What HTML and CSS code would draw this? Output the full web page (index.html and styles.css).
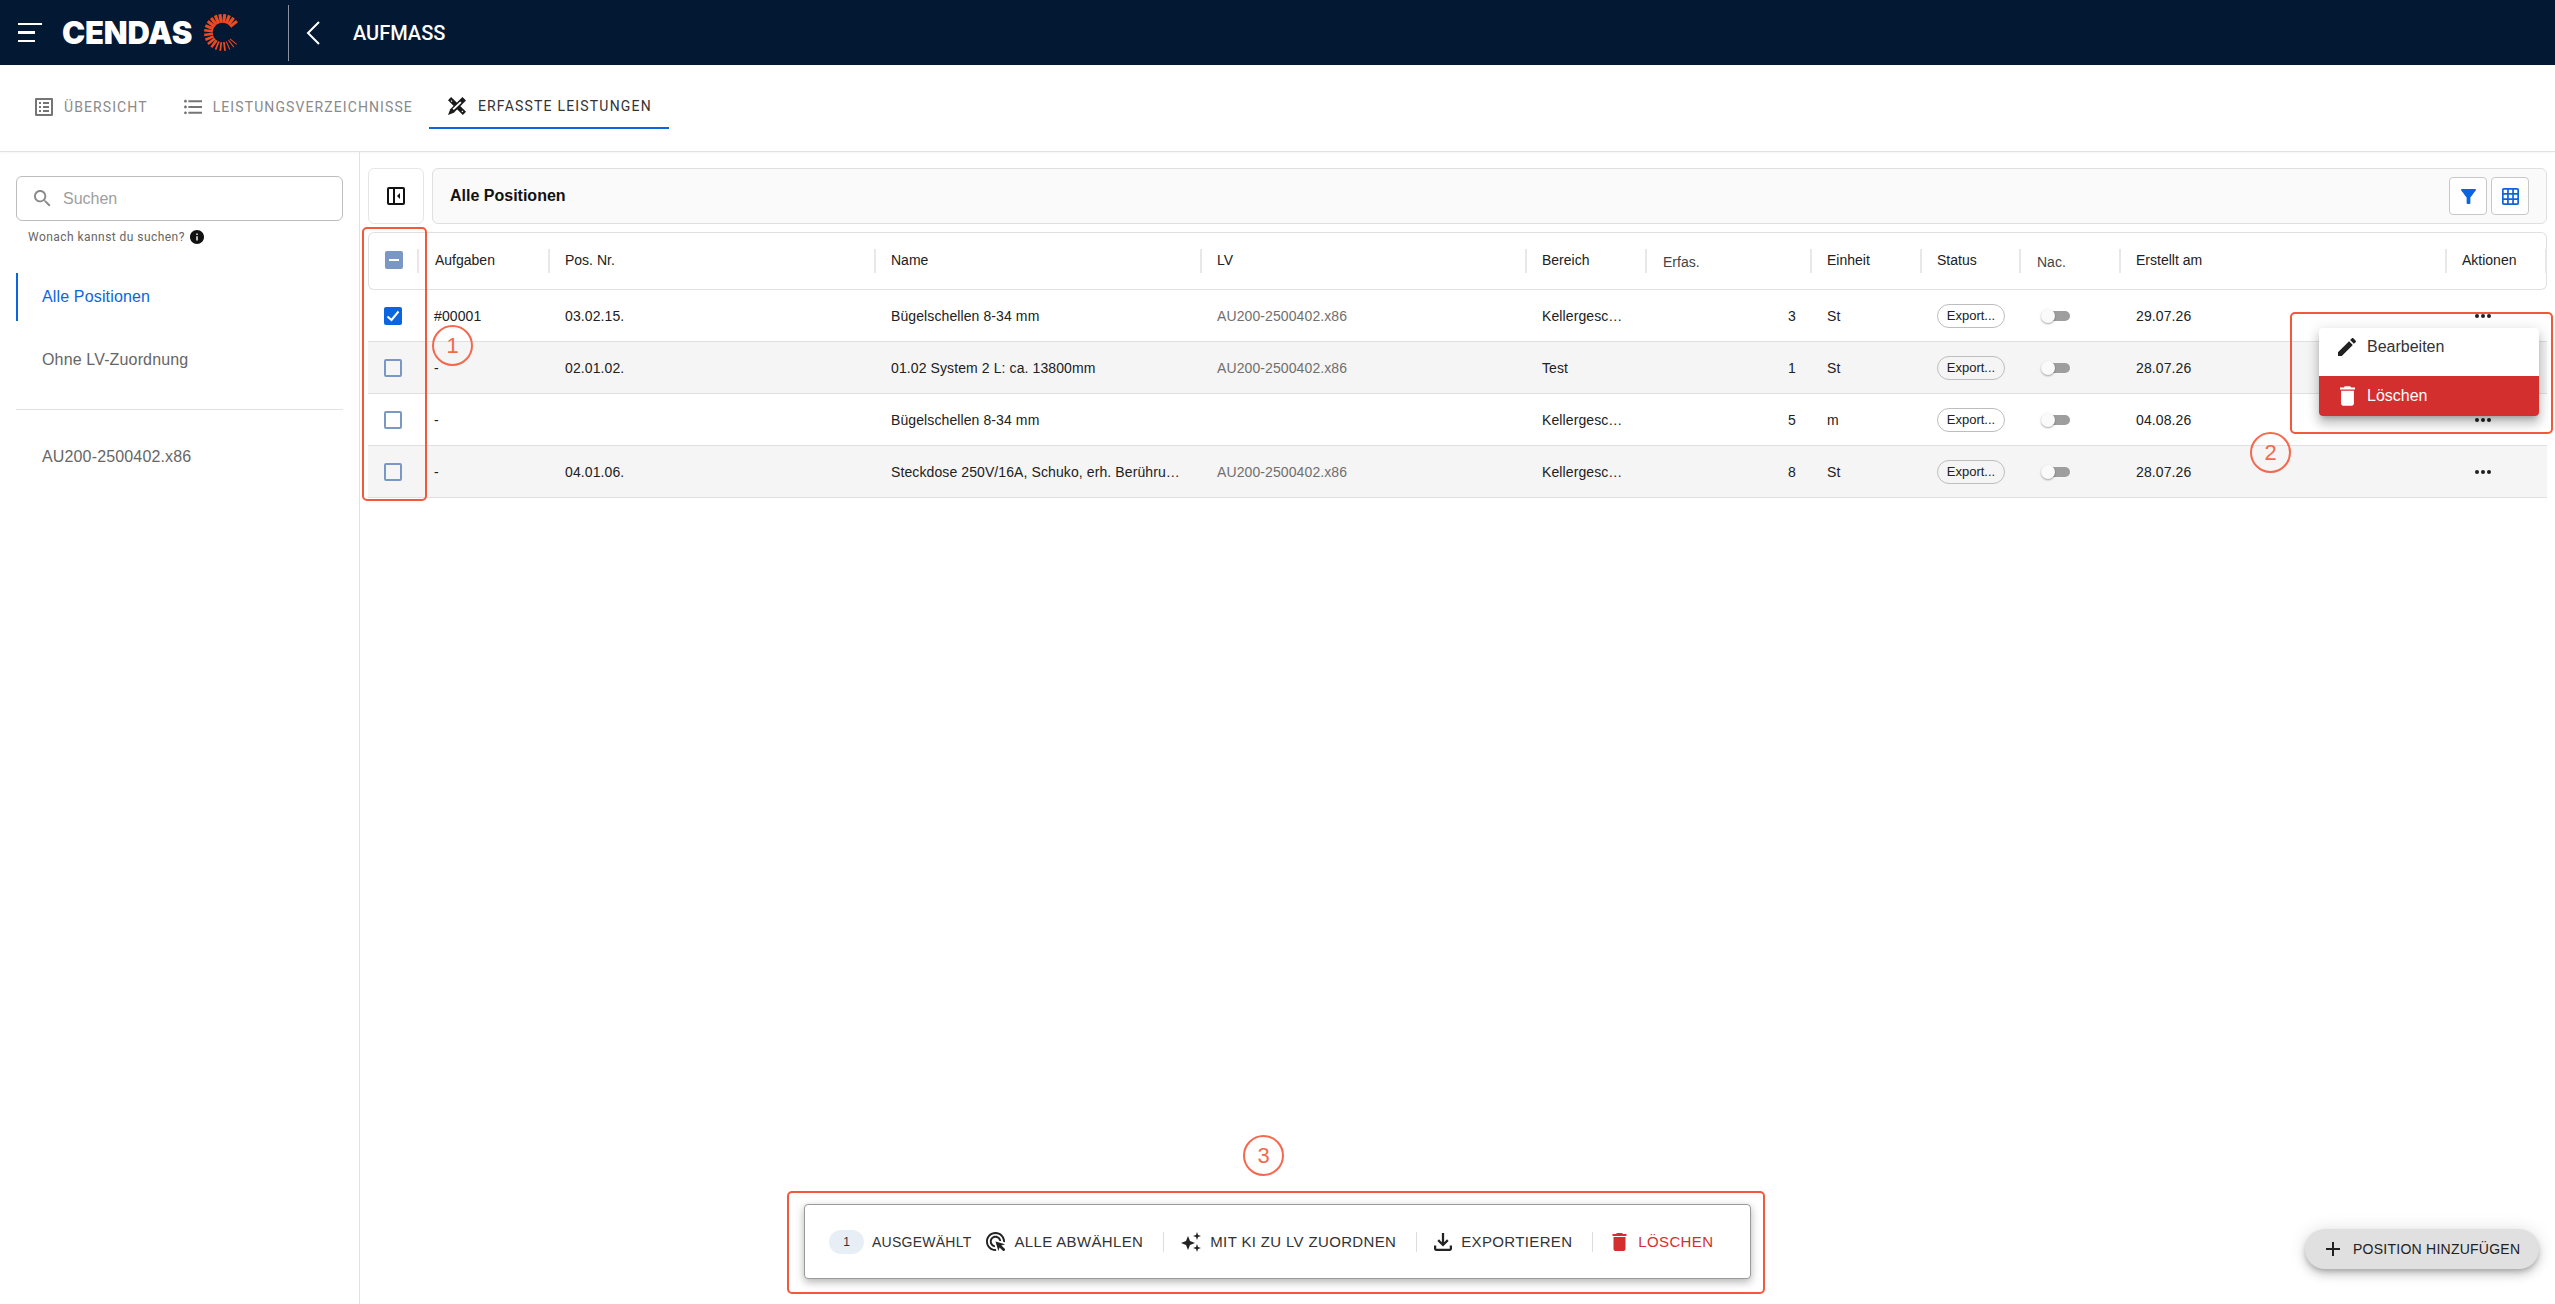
FILE: index.html
```html
<!DOCTYPE html>
<html lang="de">
<head>
    <meta charset="UTF-8">
    <title>Aufmass</title>
    <link rel="stylesheet" href="styles.css">
</head>
<body>
    <header class="topbar">
        <div class="brand">
            <div class="menu-icon"><span></span><span></span><span></span></div>
            <span class="brand-name">CENDAS</span>
            <svg class="brand-mark" viewBox="0 0 38 38" stroke="#f0491f" fill="none">
                <g stroke-width="3.2">
                    <line x1="19" y1="9" x2="19" y2="0" transform="rotate(52 19 19)"/>
                    <line x1="19" y1="9" x2="19" y2="0" transform="rotate(37 19 19)"/>
                    <line x1="19" y1="9" x2="19" y2="0" transform="rotate(22 19 19)"/>
                    <line x1="19" y1="9" x2="19" y2="0" transform="rotate(7 19 19)"/>
                    <line x1="19" y1="9" x2="19" y2="0" transform="rotate(-8 19 19)"/>
                    <line x1="19" y1="9" x2="19" y2="0" transform="rotate(-23 19 19)"/>
                    <line x1="19" y1="9" x2="19" y2="0" transform="rotate(-38 19 19)"/>
                    <line x1="19" y1="9" x2="19" y2="0" transform="rotate(-53 19 19)"/>
                    <line x1="19" y1="9" x2="19" y2="0" transform="rotate(-68 19 19)"/>
                </g>
                <g stroke-width="2.6">
                    <line x1="19" y1="9" x2="19" y2="0" transform="rotate(-83 19 19)"/>
                    <line x1="19" y1="9" x2="19" y2="0" transform="rotate(-98 19 19)"/>
                    <line x1="19" y1="9" x2="19" y2="0" transform="rotate(-113 19 19)"/>
                    <line x1="19" y1="9" x2="19" y2="0" transform="rotate(-128 19 19)"/>
                    <line x1="19" y1="9" x2="19" y2="0" transform="rotate(-143 19 19)"/>
                </g>
                <g stroke-width="1.8">
                    <line x1="19" y1="9" x2="19" y2="0" transform="rotate(-158 19 19)"/>
                    <line x1="19" y1="9" x2="19" y2="0" transform="rotate(-173 19 19)"/>
                    <line x1="19" y1="9" x2="19" y2="0" transform="rotate(172 19 19)"/>
                </g>
                <g stroke-width="1">
                    <line x1="19" y1="9" x2="19" y2="0" transform="rotate(157 19 19)"/>
                    <line x1="19" y1="9" x2="19" y2="0" transform="rotate(142 19 19)"/>
                    <line x1="19" y1="9" x2="19" y2="0" transform="rotate(130 19 19)"/>
                </g>
            </svg>
        </div>
        <svg class="back-icon" viewBox="0 0 14 24" fill="none" stroke="#fff" stroke-width="2"><polyline points="13,1 2,12 13,23"/></svg>
        <span class="page-title">AUFMASS</span>
    </header>

    <nav class="tabs">
        <a class="tab">
            <svg class="tab-icon" viewBox="3 3 18 18"><path d="M19 5v14H5V5h14m1.1-2H3.9c-.5 0-.9.4-.9.9v16.2c0 .4.4.9.9.9h16.2c.4 0 .9-.5.9-.9V3.9c0-.5-.5-.9-.9-.9zM11 7h6v2h-6V7zm0 4h6v2h-6v-2zm0 4h6v2h-6zM7 7h2v2H7zm0 4h2v2H7zm0 4h2v2H7z"/></svg>
            ÜBERSICHT
        </a>
        <a class="tab">
            <svg class="tab-icon" viewBox="2.5 3 18.5 18"><path d="M4 10.5c-.83 0-1.5.67-1.5 1.5s.67 1.5 1.5 1.5 1.5-.67 1.5-1.5-.67-1.5-1.5-1.5zm0-6c-.83 0-1.5.67-1.5 1.5S3.17 7.5 4 7.5 5.5 6.83 5.5 6 4.83 4.5 4 4.5zm0 12c-.83 0-1.5.68-1.5 1.5s.68 1.5 1.5 1.5 1.5-.68 1.5-1.5-.67-1.5-1.5-1.5zM7 19h14v-2H7v2zm0-6h14v-2H7v2zm0-8v2h14V5H7z"/></svg>
            LEISTUNGSVERZEICHNISSE
        </a>
        <a class="tab tab-active">
            <svg class="tab-icon" viewBox="0 0 20 20">
                <path d="M0 3.5L3.5 0 20 16.5 16.5 20z"/>
                <path d="M20 4L16 0 2.5 13.5 0 20l6.5-2.5z"/>
                <path d="M13.5 5l1.5 1.5-8.5 8-1.5-1.5zM4 3.5l1 1-1 1-1-1zM16 15l1 1-1 1-1-1z" fill="#fff"/>
            </svg>
            ERFASSTE LEISTUNGEN
        </a>
    </nav>

    <div class="layout">
        <aside class="sidebar">
            <div class="search">
                <svg class="search-icon" viewBox="3 3 18 18"><path d="M15.5 14h-.79l-.28-.27C15.41 12.59 16 11.11 16 9.5 16 5.91 13.09 3 9.5 3S3 5.91 3 9.5 5.91 16 9.5 16c1.61 0 3.09-.59 4.23-1.57l.27.28v.79l5 4.99L20.49 19l-4.99-5zm-6 0C7.01 14 5 11.99 5 9.5S7.01 5 9.5 5 14 7.01 14 9.5 11.99 14 9.5 14z"/></svg>
                <span>Suchen</span>
            </div>
            <div class="search-help">
                Wonach kannst du suchen?
                <svg viewBox="2 2 20 20"><path d="M12 2C6.48 2 2 6.48 2 12s4.48 10 10 10 10-4.48 10-10S17.52 2 12 2zm1 15h-2v-6h2v6zm0-8h-2V7h2v2z"/></svg>
            </div>
            <a class="nav-item nav-active">Alle Positionen</a>
            <a class="nav-item nav-second">Ohne LV-Zuordnung</a>
            <div class="nav-divider"></div>
            <a class="nav-item">AU200-2500402.x86</a>
        </aside>

        <main class="content">
            <div class="toolbar">
                <button class="panel-toggle">
                    <svg viewBox="0 0 18 18" width="18" height="18" fill="none" stroke="#111" stroke-width="2">
                        <rect x="1" y="1" width="16" height="16" rx="1"/>
                        <line x1="7" y1="1" x2="7" y2="17"/>
                        <path d="M13 6v6l-3-3z" fill="#111" stroke="none"/>
                    </svg>
                </button>
                <div class="title-bar">
                    <h2>Alle Positionen</h2>
                    <div class="title-actions">
                        <button class="icon-btn"><svg viewBox="4 4 16 16" width="15" height="15"><path d="M4.25 5.61C6.27 8.2 10 13 10 13v6c0 .55.45 1 1 1h2c.55 0 1-.45 1-1v-6s3.72-4.8 5.74-7.39c.51-.66.04-1.61-.79-1.61H5.04c-.83 0-1.3.95-.79 1.61z"/></svg></button>
                        <button class="icon-btn"><svg viewBox="2 2 20 20" width="17" height="17"><path d="M20 2H4c-1.1 0-2 .9-2 2v16c0 1.1.9 2 2 2h16c1.1 0 2-.9 2-2V4c0-1.1-.9-2-2-2zM8 20H4v-4h4v4zm0-6H4v-4h4v4zm0-6H4V4h4v4zm6 12h-4v-4h4v4zm0-6h-4v-4h4v4zm0-6h-4V4h4v4zm6 12h-4v-4h4v4zm0-6h-4v-4h4v4zm0-6h-4V4h4v4z"/></svg></button>
                    </div>
                </div>
            </div>

            <div class="table">
                <div class="row head">
                    <div class="cell cell-check"><span class="check check-mixed"></span></div>
                    <div class="cell cell-first">Aufgaben</div>
                    <div class="cell">Pos. Nr.</div>
                    <div class="cell">Name</div>
                    <div class="cell">LV</div>
                    <div class="cell">Bereich</div>
                    <div class="cell cell-low">Erfas.</div>
                    <div class="cell">Einheit</div>
                    <div class="cell">Status</div>
                    <div class="cell cell-low">Nac.</div>
                    <div class="cell">Erstellt am</div>
                    <div class="cell">Aktionen</div>
                </div>

                <div class="row">
                    <div class="cell cell-check"><span class="check check-on"><svg viewBox="0 0 18 18" width="18" height="18" fill="none" stroke="#fff" stroke-width="2"><polyline points="3.5,9.5 7.5,13 14.5,4.5"/></svg></span></div>
                    <div class="cell">#00001</div>
                    <div class="cell">03.02.15.</div>
                    <div class="cell">Bügelschellen 8-34 mm</div>
                    <div class="cell muted">AU200-2500402.x86</div>
                    <div class="cell">Kellergesc…</div>
                    <div class="cell cell-num">3</div>
                    <div class="cell">St</div>
                    <div class="cell"><span class="pill">Export...</span></div>
                    <div class="cell cell-switch"><span class="switch"><span class="thumb"></span></span></div>
                    <div class="cell">29.07.26</div>
                    <div class="cell"><svg class="dots" viewBox="0 0 16 4"><circle cx="2" cy="2" r="2"/><circle cx="8" cy="2" r="2"/><circle cx="14" cy="2" r="2"/></svg></div>
                </div>

                <div class="row stripe">
                    <div class="cell cell-check"><span class="check"></span></div>
                    <div class="cell">-</div>
                    <div class="cell">02.01.02.</div>
                    <div class="cell">01.02 System 2 L: ca. 13800mm</div>
                    <div class="cell muted">AU200-2500402.x86</div>
                    <div class="cell">Test</div>
                    <div class="cell cell-num">1</div>
                    <div class="cell">St</div>
                    <div class="cell"><span class="pill">Export...</span></div>
                    <div class="cell cell-switch"><span class="switch"><span class="thumb"></span></span></div>
                    <div class="cell">28.07.26</div>
                    <div class="cell"><svg class="dots" viewBox="0 0 16 4"><circle cx="2" cy="2" r="2"/><circle cx="8" cy="2" r="2"/><circle cx="14" cy="2" r="2"/></svg></div>
                </div>

                <div class="row">
                    <div class="cell cell-check"><span class="check"></span></div>
                    <div class="cell">-</div>
                    <div class="cell"></div>
                    <div class="cell">Bügelschellen 8-34 mm</div>
                    <div class="cell muted"></div>
                    <div class="cell">Kellergesc…</div>
                    <div class="cell cell-num">5</div>
                    <div class="cell">m</div>
                    <div class="cell"><span class="pill">Export...</span></div>
                    <div class="cell cell-switch"><span class="switch"><span class="thumb"></span></span></div>
                    <div class="cell">04.08.26</div>
                    <div class="cell"><svg class="dots" viewBox="0 0 16 4"><circle cx="2" cy="2" r="2"/><circle cx="8" cy="2" r="2"/><circle cx="14" cy="2" r="2"/></svg></div>
                </div>

                <div class="row stripe">
                    <div class="cell cell-check"><span class="check"></span></div>
                    <div class="cell">-</div>
                    <div class="cell">04.01.06.</div>
                    <div class="cell">Steckdose 250V/16A, Schuko, erh. Berühru…</div>
                    <div class="cell muted">AU200-2500402.x86</div>
                    <div class="cell">Kellergesc…</div>
                    <div class="cell cell-num">8</div>
                    <div class="cell">St</div>
                    <div class="cell"><span class="pill">Export...</span></div>
                    <div class="cell cell-switch"><span class="switch"><span class="thumb"></span></span></div>
                    <div class="cell">28.07.26</div>
                    <div class="cell"><svg class="dots" viewBox="0 0 16 4"><circle cx="2" cy="2" r="2"/><circle cx="8" cy="2" r="2"/><circle cx="14" cy="2" r="2"/></svg></div>
                </div>
            </div>
        </main>
    </div>

    <!-- Kontextmenü der Zeile -->
    <div class="row-menu">
        <div class="menu-item">
            <svg viewBox="3 3 18 18" width="18" height="18"><path d="M3 17.25V21h3.75L17.81 9.94l-3.75-3.75L3 17.25zM20.71 7.04c.39-.39.39-1.02 0-1.41l-2.34-2.34c-.39-.39-1.02-.39-1.41 0l-1.83 1.83 3.75 3.75 1.83-1.83z"/></svg>
            Bearbeiten
        </div>
        <div class="menu-item menu-danger">
            <svg viewBox="5 3 14 18" width="15" height="20"><path d="M6 19c0 1.1.9 2 2 2h8c1.1 0 2-.9 2-2V7H6v12zM19 4h-3.5l-1-1h-5l-1 1H5v2h14V4z"/></svg>
            Löschen
        </div>
    </div>

    <!-- Leiste für die Mehrfachauswahl -->
    <div class="bulk-bar">
        <span class="count">1</span>
        <span class="bulk-label">AUSGEWÄHLT</span>
        <button class="bulk-btn bulk-first">
            <svg viewBox="2 2 20 20" width="19" height="19"><path d="M11.71 17.99C8.53 17.84 6 15.22 6 12c0-3.31 2.69-6 6-6 3.22 0 5.84 2.53 5.99 5.71l-2.1-.63C15.48 9.31 13.89 8 12 8c-2.21 0-4 1.79-4 4 0 1.89 1.31 3.48 3.08 3.89l.63 2.1zM22 12c0 .3-.01.6-.04.9l-1.97-.59c.01-.1.01-.21.01-.31 0-4.42-3.58-8-8-8s-8 3.58-8 8 3.58 8 8 8c.1 0 .21 0 .31-.01l.59 1.97c-.3.03-.6.04-.9.04-5.52 0-10-4.48-10-10S6.48 2 12 2s10 4.48 10 10zm-3.77 4.26L22 15l-10-3 3 10 1.26-3.77 4.27 4.27 1.98-1.98-4.28-4.26z"/></svg>
            ALLE ABWÄHLEN
        </button>
        <span class="bulk-sep"></span>
        <button class="bulk-btn">
            <svg viewBox="0 0 20 20" width="20" height="20"><path d="M7 4l2 5 5 2-5 2-2 5-2-5-5-2 5-2zM16 0l1 3 3 1-3 1-1 3-1-3-3-1 3-1zM16 12l1 3 3 1-3 1-1 3-1-3-3-1 3-1z"/></svg>
            MIT KI ZU LV ZUORDNEN
        </button>
        <span class="bulk-sep"></span>
        <button class="bulk-btn">
            <svg viewBox="4 4 16 16" width="18" height="18"><path d="M18 15v3H6v-3H4v3c0 1.1.9 2 2 2h12c1.1 0 2-.9 2-2v-3h-2zm-1-4-1.41-1.41L13 12.17V4h-2v8.17L8.41 9.59 7 11l5 5 5-5z"/></svg>
            EXPORTIEREN
        </button>
        <span class="bulk-sep"></span>
        <button class="bulk-btn bulk-danger">
            <svg viewBox="5 3 14 18" width="15" height="18"><path d="M6 19c0 1.1.9 2 2 2h8c1.1 0 2-.9 2-2V7H6v12zM19 4h-3.5l-1-1h-5l-1 1H5v2h14V4z"/></svg>
            LÖSCHEN
        </button>
    </div>

    <button class="fab">
        <svg viewBox="5 5 14 14" width="14" height="14"><path d="M19 13h-6v6h-2v-6H5v-2h6V5h2v6h6v2z"/></svg>
        POSITION HINZUFÜGEN
    </button>

    <!-- Markierungen -->
    <div class="mark-box mark-box-1"></div>
    <div class="mark-box mark-box-2"></div>
    <div class="mark-box mark-box-3"></div>
    <div class="mark-num mark-num-1">1</div>
    <div class="mark-num mark-num-2">2</div>
    <div class="mark-num mark-num-3">3</div>
</body>
</html>
```

FILE: styles.css
```css
* {
    margin: 0;
    padding: 0;
    box-sizing: border-box;
}

html, body {
    height: 100%;
}

body {
    display: flex;
    flex-direction: column;
    overflow: hidden;
    font-family: "Liberation Sans", Arial, sans-serif;
    color: #212121;
    background: #fff;
}

button {
    font-family: inherit;
    border: none;
    background: none;
}

/* Kopfzeile */
.topbar {
    height: 65px;
    flex-shrink: 0;
    display: flex;
    align-items: center;
    padding-left: 18px;
    background: #021833;
    color: #fff;
}

.brand {
    width: 271px;
    height: 56px;
    display: flex;
    align-items: center;
    border-right: 1px solid #8b93a0;
}

.menu-icon {
    width: 24px;
    display: flex;
    flex-direction: column;
    gap: 6px;
}

.menu-icon span {
    height: 2.5px;
    width: 17px;
    background: #fff;
}

.menu-icon span:first-child {
    width: 24px;
}

.brand-name {
    margin-left: 20px;
    width: 131px;
    font-family: Inter, sans-serif;
    font-weight: 900;
    font-size: 31px;
    letter-spacing: -0.2px;
    line-height: 1;
}

.brand-mark {
    width: 37px;
    height: 37px;
    margin-left: 11px;
}

.back-icon {
    width: 14px;
    height: 24px;
    margin-left: 17px;
}

.page-title {
    margin-left: 33px;
    font-family: Roboto, sans-serif;
    font-weight: 500;
    font-size: 20px;
}

/* Reiter */
.tabs {
    height: 87px;
    flex-shrink: 0;
    display: flex;
    align-items: flex-start;
    padding: 20px 0 0 19px;
    border-bottom: 1px solid #e2e2e2;
    box-shadow: 0 1px 2px rgba(0, 0, 0, 0.04);
}

.tab {
    height: 44px;
    display: flex;
    align-items: center;
    gap: 11px;
    padding: 0 16px;
    font-family: Roboto, sans-serif;
    font-size: 14px;
    letter-spacing: 1.1px;
    color: #8a8a8a;
}

.tab + .tab {
    margin-left: 4px;
}

.tab-icon {
    width: 18px;
    height: 18px;
    fill: #757575;
}

.tab-active {
    margin-left: 0 !important;
    padding: 0 17px 0 19px;
    gap: 12px;
    letter-spacing: 1.2px;
    color: #333;
    border-bottom: 2px solid #0b65e0;
}

.tab-active .tab-icon {
    fill: #1a1a1a;
}

.layout {
    flex: 1;
    display: flex;
    min-height: 0;
}

/* Seitenleiste */
.sidebar {
    width: 360px;
    flex-shrink: 0;
    padding: 24px 16px 0 16px;
    border-right: 1px solid #e2e2e2;
}

.search {
    height: 45px;
    display: flex;
    align-items: center;
    gap: 12px;
    padding-left: 17px;
    border: 1px solid #bdbdbd;
    border-radius: 6px;
    font-size: 16px;
    color: #9e9e9e;
}

.search-icon {
    width: 17px;
    height: 17px;
    fill: #8a8a8a;
}

.search-help {
    display: flex;
    align-items: center;
    gap: 5px;
    height: 16px;
    margin: 8px 0 28px 12px;
    font-family: Roboto, sans-serif;
    font-size: 12px;
    letter-spacing: 0.45px;
    color: #666;
}

.search-help svg {
    width: 14px;
    height: 14px;
    fill: #111;
}

.nav-item {
    display: flex;
    align-items: center;
    height: 48px;
    padding-left: 26px;
    font-size: 16px;
    letter-spacing: 0.15px;
    color: #666;
}

.nav-active {
    padding-left: 24px;
    border-left: 2px solid #0b65e0;
    color: #0b65e0;
}

.nav-second {
    margin-top: 15px;
}

.nav-divider {
    height: 1px;
    margin: 25px 0 23px;
    background: #e2e2e2;
}

/* Hauptbereich */
.content {
    flex: 1;
    min-width: 0;
    padding: 16px 8px 0 8px;
}

.toolbar {
    display: flex;
    gap: 8px;
    height: 56px;
    margin-bottom: 8px;
}

.panel-toggle {
    width: 56px;
    display: flex;
    align-items: center;
    justify-content: center;
    border: 1px solid #e6e6e6;
    border-radius: 6px;
}

.title-bar {
    flex: 1;
    display: flex;
    align-items: center;
    justify-content: space-between;
    padding: 0 17px 0 17px;
    background: #fafafa;
    border: 1px solid #e0e0e0;
    border-radius: 6px;
}

.title-bar h2 {
    font-size: 16px;
    font-weight: bold;
    color: #111;
}

.title-actions {
    display: flex;
    gap: 4px;
}

.icon-btn {
    width: 38px;
    height: 38px;
    display: flex;
    align-items: center;
    justify-content: center;
    background: #fff;
    border: 1px solid #c8c8c8;
    border-radius: 4px;
    fill: #0b65e0;
}

/* Tabelle */
.row {
    display: grid;
    grid-template-columns: 51px 131px 326px 326px 325px 120px 165px 110px 99px 100px 326px 1fr;
    height: 52px;
    border-bottom: 1px solid #e0e0e0;
    font-size: 14px;
    letter-spacing: 0.1px;
}

.stripe {
    background: #f5f5f5;
}

.head {
    height: 58px;
    letter-spacing: 0;
    border-bottom: none;
    border-radius: 6px;
    box-shadow: inset 0 0 0 1px #e0e0e0;
}

.cell {
    display: flex;
    align-items: center;
    min-width: 0;
    padding: 0 15px;
    white-space: nowrap;
    overflow: hidden;
}

.head .cell {
    padding-bottom: 2px;
    background: linear-gradient(#e8e8e8, #e8e8e8) right center / 2px 24px no-repeat;
}

.head .cell-first {
    padding-left: 16px;
}

.head .cell-low {
    padding-left: 16px;
    padding-top: 2px;
    padding-bottom: 0;
    color: #444;
}

.row .cell-check {
    padding-left: 16px;
    padding-right: 0;
}

.head .cell-check {
    padding-left: 17px;
}

.cell-num {
    justify-content: flex-end;
    padding-right: 16px;
}

.muted {
    color: #6f6f6f;
}

.check {
    width: 18px;
    height: 18px;
    display: block;
    border: 2px solid #7b98c4;
    border-radius: 2px;
}

.check-on {
    border: none;
    background: #0b65e0;
}

.check-mixed {
    position: relative;
    background: #7b98c4;
}

.check-mixed::after {
    content: "";
    position: absolute;
    left: 2px;
    top: 6px;
    width: 10px;
    height: 2px;
    background: #fff;
}

.pill {
    width: 68px;
    height: 24px;
    display: flex;
    align-items: center;
    justify-content: center;
    border: 1px solid #bdbdbd;
    border-radius: 12px;
    background: #fff;
    font-size: 13px;
    letter-spacing: 0;
}

.stripe .pill {
    background: #f5f5f5;
}

.cell-switch {
    padding-left: 24px;
    overflow: visible;
}

.switch {
    width: 25px;
    height: 10px;
    display: flex;
    align-items: center;
    border-radius: 5px;
    background: #9e9e9e;
}

.thumb {
    width: 14px;
    height: 14px;
    margin-left: -4px;
    border-radius: 50%;
    background: #fafafa;
    box-shadow: 0 1px 2px rgba(0, 0, 0, 0.35);
}

.dots {
    width: 16px;
    height: 4px;
    margin-left: 13px;
    fill: #212121;
}

/* Kontextmenü */
.row-menu {
    position: absolute;
    left: 2319px;
    top: 328px;
    width: 220px;
    background: #fff;
    border-radius: 4px;
    overflow: hidden;
    box-shadow: 0 5px 5px -3px rgba(0, 0, 0, 0.2), 0 8px 10px 1px rgba(0, 0, 0, 0.14), 0 3px 14px 2px rgba(0, 0, 0, 0.12);
}

.menu-item {
    height: 48px;
    display: flex;
    align-items: center;
    gap: 11px;
    padding: 0 0 10px 19px;
    font-size: 16px;
    color: #333;
}

.menu-item svg {
    fill: #212121;
}

.menu-danger {
    height: 40px;
    padding: 0 0 0 21px;
    gap: 12px;
    background: #d32f2f;
    color: #fff;
}

.menu-danger svg {
    fill: #fff;
}

/* Mehrfachauswahl */
.bulk-bar {
    position: absolute;
    left: 804px;
    top: 1204px;
    width: 947px;
    height: 75px;
    display: flex;
    align-items: center;
    padding-left: 24px;
    background: #fff;
    border: 1px solid #9a9a9a;
    border-radius: 4px;
    box-shadow: 0 3px 8px rgba(0, 0, 0, 0.3);
    color: #333;
}

.count {
    width: 35px;
    height: 24px;
    display: flex;
    align-items: center;
    justify-content: center;
    border-radius: 12px;
    background: #e8eef6;
    font-size: 12px;
}

.bulk-label {
    margin-left: 8px;
    font-size: 14px;
    letter-spacing: 0.25px;
}

.bulk-btn {
    display: flex;
    align-items: center;
    gap: 9px;
    font-size: 15px;
    letter-spacing: 0.35px;
    color: #333;
    fill: #222;
}

.bulk-first {
    margin-left: 15px;
}

.bulk-sep {
    width: 1px;
    height: 20px;
    margin: 0 17px 0 20px;
    background: #ddd;
}

.bulk-danger {
    gap: 11px;
    margin-left: 2px;
    color: #d32f2f;
    fill: #d32f2f;
}

.fab {
    position: absolute;
    left: 2305px;
    top: 1229px;
    width: 234px;
    height: 40px;
    display: flex;
    align-items: center;
    gap: 13px;
    padding-left: 21px;
    background: #e0e0e0;
    border-radius: 20px;
    font-size: 14px;
    letter-spacing: 0.25px;
    color: #222;
    fill: #222;
    box-shadow: 0 3px 5px -1px rgba(0, 0, 0, 0.2), 0 6px 10px 0 rgba(0, 0, 0, 0.14), 0 1px 18px 0 rgba(0, 0, 0, 0.12);
}

/* Markierungen */
.mark-box {
    position: absolute;
    border: 2px solid #f4583a;
    border-radius: 5px;
}

.mark-box-1 {
    left: 362px;
    top: 227px;
    width: 65px;
    height: 274px;
}

.mark-box-2 {
    left: 2290px;
    top: 312px;
    width: 263px;
    height: 122px;
}

.mark-box-3 {
    left: 787px;
    top: 1191px;
    width: 978px;
    height: 103px;
}

.mark-num {
    position: absolute;
    width: 41px;
    height: 41px;
    display: flex;
    align-items: center;
    justify-content: center;
    border: 2px solid #f4694e;
    border-radius: 50%;
    font-size: 22px;
    color: #f4694e;
}

.mark-num-1 {
    left: 432px;
    top: 325px;
}

.mark-num-2 {
    left: 2250px;
    top: 432px;
}

.mark-num-3 {
    left: 1243px;
    top: 1135px;
}
```
